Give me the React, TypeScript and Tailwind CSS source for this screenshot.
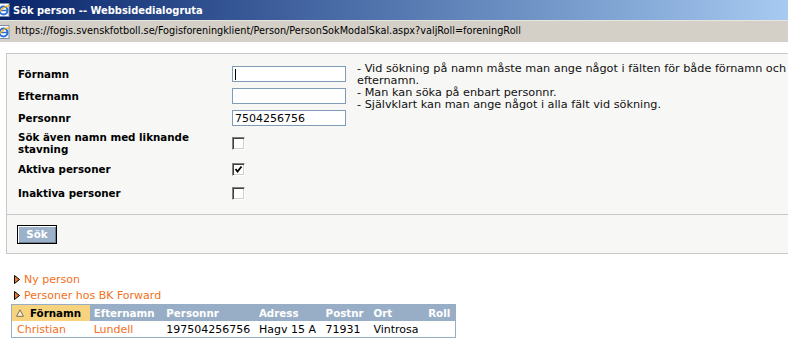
import React from 'react'

interface Col {
  label: string
  width: string
}

const columns: Col[] = [
  { label: 'Förnamn', width: 'w-[78px]' },
  { label: 'Efternamn', width: 'w-[73px]' },
  { label: 'Personnr', width: 'w-[93px]' },
  { label: 'Adress', width: 'w-[67px]' },
  { label: 'Postnr', width: 'w-[48px]' },
  { label: 'Ort', width: 'w-[55px]' },
  { label: 'Roll', width: 'w-[31px]' },
]

const rows = [
  ['Christian', 'Lundell', '197504256756', 'Hagv 15 A', '71931', 'Vintrosa', ''],
]

function IeIcon(): JSX.Element {
  return (
    <svg width="13" height="14" viewBox="0 0 13 14" className="shrink-0">
      <rect x="0" y="0.5" width="11" height="13" fill="#fff" stroke="#7a8fa8" />
      <circle cx="5.5" cy="7.5" r="4" fill="none" stroke="#2a6fd6" strokeWidth="2" />
      <path d="M2 7.5h7" stroke="#2a6fd6" strokeWidth="1.5" />
      <path d="M0 11 Q6 2 12 3" stroke="#f0b020" strokeWidth="1.2" fill="none" />
    </svg>
  )
}

function TitleBar(): JSX.Element {
  return (
    <div className="h-[20px] flex items-center bg-gradient-to-r from-[#0a246a] via-[#4d6fa9] via-45% to-[#a6caf0]">
      <div className="-ml-[2px] mr-[2px]">
        <IeIcon />
      </div>
      <span className="font-['DejaVu_Sans_Condensed','DejaVu_Sans',sans-serif] font-bold text-[11px] text-white leading-none">
        Sök person -- Webbsidedialogruta
      </span>
    </div>
  )
}

function AddressBar(): JSX.Element {
  return (
    <div className="h-[22px] flex items-center bg-[#d4d0c8] border-t border-[#e8e6e0]">
      <div className="-ml-[2px] mr-[4px]">
        <IeIcon />
      </div>
      <span className="font-['DejaVu_Sans_Condensed','DejaVu_Sans',sans-serif] text-[10.8px] text-black leading-none">
        https://fogis.svenskfotboll.se/Fogisforeningklient/Person/PersonSokModalSkal.aspx?valjRoll=foreningRoll
      </span>
    </div>
  )
}

function TextBox({ value, caret }: { value?: string; caret?: boolean }): JSX.Element {
  return (
    <div className="relative w-[114px] h-[16px] bg-white border border-[#7f9db9] flex items-center pl-[2px] text-[11px] leading-none">
      {value}
      {caret && <span className="absolute left-[2px] top-[2px] w-px h-[11px] bg-black" />}
    </div>
  )
}

function CheckBox({ checked }: { checked?: boolean }): JSX.Element {
  return (
    <div className="w-[13px] h-[13px] bg-white border border-t-[#808080] border-l-[#808080] border-b-white border-r-white shadow-[inset_1px_1px_0_#404040,inset_-1px_-1px_0_#d4d0c8] flex items-center justify-center">
      {checked && (
        <svg width="9" height="9" viewBox="0 0 9 9">
          <path d="M1.5 4 L3.5 6.5 L7.5 1.5" stroke="#000" strokeWidth="1.8" fill="none" />
        </svg>
      )}
    </div>
  )
}

function Label({ children }: { children: React.ReactNode }): JSX.Element {
  return <div className="flex items-center font-bold text-[10.3px] leading-[12px]">{children}</div>
}

function SearchPanel(): JSX.Element {
  return (
    <div className="w-[800px] border border-[#c8c8c8] bg-[#f7f7f5]">
      <div className="pt-[9px] pb-[9px] pl-[11px] grid grid-cols-[214px_125px_1fr] grid-rows-[22px_22px_22px_28px_24px_24px] border-b border-[#c8c8c8]">
        <Label>Förnamn</Label>
        <div className="flex items-center"><TextBox caret /></div>
        <div className="row-span-3 text-[11.25px] leading-[12px] text-[#111]">
          <div>- Vid sökning på namn måste man ange något i fälten för både förnamn och efternamn.</div>
          <div>- Man kan söka på enbart personnr.</div>
          <div>- Självklart kan man ange något i alla fält vid sökning.</div>
        </div>
        <Label>Efternamn</Label>
        <div className="flex items-center"><TextBox /></div>
        <Label>Personnr</Label>
        <div className="flex items-center"><TextBox value="7504256756" /></div>
        <Label>Sök även namn med liknande<br />stavning</Label>
        <div className="flex items-center"><CheckBox /></div>
        <div />
        <Label>Aktiva personer</Label>
        <div className="flex items-center"><CheckBox checked /></div>
        <div />
        <Label>Inaktiva personer</Label>
        <div className="flex items-center"><CheckBox /></div>
        <div />
      </div>
      <div className="flex pt-[10px] pb-[9px] pl-[10px]">
        <button className="block w-[40px] h-[19px] bg-[#9ab1c9] border border-black shadow-[inset_1px_1px_0_#fff,inset_-1px_-1px_0_#6f7f90] text-white font-bold text-[10.3px] leading-none">
          Sök
        </button>
      </div>
    </div>
  )
}

function Bullet(): JSX.Element {
  return (
    <svg width="6" height="9" viewBox="0 0 6 9" className="shrink-0">
      <path d="M0.5 0.5 L5.5 4.5 L0.5 8.5 Z" fill="#f07828" stroke="#000" strokeWidth="1" />
    </svg>
  )
}

function LinkRow({ text }: { text: string }): JSX.Element {
  return (
    <div className="h-[16px] flex items-center gap-[4px] text-[11px] text-[#f26f21] leading-none">
      <Bullet />
      <span>{text}</span>
    </div>
  )
}

function ResultTable(): JSX.Element {
  return (
    <div className="ml-[11px] mt-[1px] w-[445px] border border-[#98aec6]">
      <div className="flex h-[16px] bg-[#98aec6] items-center">
        {columns.map((c, i) => (
          <div
            key={c.label}
            className={`${c.width} h-full flex items-center gap-[6px] font-bold text-[10.3px] leading-none ${
              i === 0 ? 'bg-[#f6d37c] text-black pl-[4px]' : 'text-white pl-[4px]'
            }`}
          >
            {i === 0 && (
              <svg width="8" height="8" viewBox="0 0 8 8" className="shrink-0">
                <path d="M4 0.8 L7.4 7.3 L0.6 7.3 Z" fill="#fbf3d8" stroke="#7d7355" strokeWidth="1" />
              </svg>
            )}
            {c.label}
          </div>
        ))}
      </div>
      {rows.map((r, ri) => (
        <div key={ri} className="flex h-[16px] bg-white items-center text-[11px] leading-none">
          {r.map((cell, ci) => (
            <div
              key={ci}
              className={`${columns[ci].width} ${ci === 0 ? 'pl-[5px]' : 'pl-[4px]'} ${ci < 2 ? 'text-[#f26f21]' : 'text-black'}`}
            >
              {cell}
            </div>
          ))}
        </div>
      ))}
    </div>
  )
}

export default function App(): JSX.Element {
  return (
    <div className="w-[788px] h-[343px] overflow-hidden bg-white font-['DejaVu_Sans',sans-serif] text-black">
      <TitleBar />
      <AddressBar />
      <div className="pt-[11px] pl-[6px]">
        <SearchPanel />
      </div>
      <div className="pl-[14px] pt-[17px]">
        <LinkRow text="Ny person" />
        <LinkRow text="Personer hos BK Forward" />
      </div>
      <ResultTable />
    </div>
  )
}
